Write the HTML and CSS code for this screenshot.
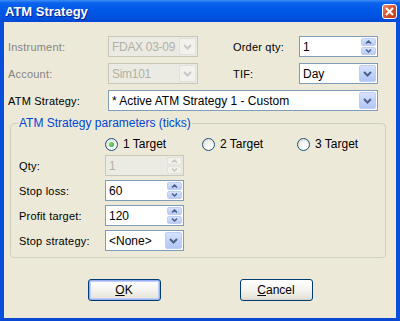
FILE: index.html
```html
<!DOCTYPE html>
<html lang="en">
<head>
  <meta charset="UTF-8">
  <meta name="viewport" content="width=device-width, initial-scale=1.0">
  <title>ATM Strategy</title>
  <link rel="stylesheet" href="styles.css">
</head>
<body>
  <div class="window">
    <div class="titlebar">
      <span class="title">ATM Strategy</span>
      <span class="close">
        <svg width="9" height="9" viewBox="0 0 9 9"><path d="M1 1L8 8M8 1L1 8" stroke="#fff" stroke-width="2"/></svg>
      </span>
    </div>

    <div class="content">
      <div class="top-grid">
        <label class="lbl disabled">Instrument:</label>
        <div class="combo is-disabled">
          <span class="val">FDAX 03-09</span>
          <span class="drop"><svg width="9" height="6" viewBox="0 0 9 6"><path d="M1 1L4.5 4.5L8 1" fill="none" stroke="#c8c8c8" stroke-width="2"/></svg></span>
        </div>
        <label class="lbl lbl-pad">Order qty:</label>
        <div class="spin">
          <span class="val">1</span>
          <span class="arrows">
            <span class="arr"><svg width="7" height="4" viewBox="0 0 7 4"><path d="M1 3.5L3.5 1L6 3.5" fill="none" stroke="#4d6185" stroke-width="1.5"/></svg></span>
            <span class="arr"><svg width="7" height="4" viewBox="0 0 7 4"><path d="M1 0.5L3.5 3L6 0.5" fill="none" stroke="#4d6185" stroke-width="1.5"/></svg></span>
          </span>
        </div>

        <label class="lbl disabled">Account:</label>
        <div class="combo is-disabled">
          <span class="val">Sim101</span>
          <span class="drop"><svg width="9" height="6" viewBox="0 0 9 6"><path d="M1 1L4.5 4.5L8 1" fill="none" stroke="#c8c8c8" stroke-width="2"/></svg></span>
        </div>
        <label class="lbl lbl-pad">TIF:</label>
        <div class="combo">
          <span class="val">Day</span>
          <span class="drop"><svg width="9" height="6" viewBox="0 0 9 6"><path d="M1 1L4.5 4.5L8 1" fill="none" stroke="#4d6185" stroke-width="2"/></svg></span>
        </div>

        <label class="lbl">ATM Strategy:</label>
        <div class="combo wide">
          <span class="val">* Active ATM Strategy 1 - Custom</span>
          <span class="drop"><svg width="9" height="6" viewBox="0 0 9 6"><path d="M1 1L4.5 4.5L8 1" fill="none" stroke="#4d6185" stroke-width="2"/></svg></span>
        </div>
      </div>

      <fieldset class="group">
        <legend>ATM Strategy parameters (ticks)</legend>
        <div class="group-grid">
          <label class="radio-item first"><span class="radio checked"></span>1 Target</label>
          <label class="radio-item"><span class="radio"></span>2 Target</label>
          <label class="radio-item"><span class="radio"></span>3 Target</label>

          <label class="lbl">Qty:</label>
          <div class="spin is-disabled">
            <span class="val">1</span>
            <span class="arrows">
              <span class="arr"><svg width="7" height="4" viewBox="0 0 7 4"><path d="M1 3.5L3.5 1L6 3.5" fill="none" stroke="#c9c7ba" stroke-width="1.5"/></svg></span>
              <span class="arr"><svg width="7" height="4" viewBox="0 0 7 4"><path d="M1 0.5L3.5 3L6 0.5" fill="none" stroke="#c9c7ba" stroke-width="1.5"/></svg></span>
            </span>
          </div>

          <label class="lbl">Stop loss:</label>
          <div class="spin">
            <span class="val">60</span>
            <span class="arrows">
              <span class="arr"><svg width="7" height="4" viewBox="0 0 7 4"><path d="M1 3.5L3.5 1L6 3.5" fill="none" stroke="#4d6185" stroke-width="1.5"/></svg></span>
              <span class="arr"><svg width="7" height="4" viewBox="0 0 7 4"><path d="M1 0.5L3.5 3L6 0.5" fill="none" stroke="#4d6185" stroke-width="1.5"/></svg></span>
            </span>
          </div>

          <label class="lbl">Profit target:</label>
          <div class="spin">
            <span class="val">120</span>
            <span class="arrows">
              <span class="arr"><svg width="7" height="4" viewBox="0 0 7 4"><path d="M1 3.5L3.5 1L6 3.5" fill="none" stroke="#4d6185" stroke-width="1.5"/></svg></span>
              <span class="arr"><svg width="7" height="4" viewBox="0 0 7 4"><path d="M1 0.5L3.5 3L6 0.5" fill="none" stroke="#4d6185" stroke-width="1.5"/></svg></span>
            </span>
          </div>

          <label class="lbl">Stop strategy:</label>
          <div class="combo">
            <span class="val">&lt;None&gt;</span>
            <span class="drop"><svg width="9" height="6" viewBox="0 0 9 6"><path d="M1 1L4.5 4.5L8 1" fill="none" stroke="#4d6185" stroke-width="2"/></svg></span>
          </div>
        </div>
      </fieldset>

      <div class="buttons">
        <button class="btn default"><u>O</u>K</button>
        <button class="btn"><u>C</u>ancel</button>
      </div>
    </div>
  </div>
</body>
</html>
```

FILE: styles.css
```css
body {
  margin: 0;
  padding: 0;
  font-family: "Liberation Sans", Arial, sans-serif;
  font-size: 11px;
  color: #000;
  background: #ece9d8;
}
.window {
  width: 400px;
  height: 321px;
  display: flex;
  flex-direction: column;
  box-sizing: border-box;
}
.titlebar {
  height: 22px;
  flex: none;
  display: flex;
  align-items: center;
  justify-content: space-between;
  padding: 0 3px 0 5px;
  background: linear-gradient(to bottom, #3d8ef7 0, #0a62ec 3px, #0058e7 45%, #0052e0 80%, #0046d3 100%);
}
.title {
  color: #fff;
  font-weight: bold;
  font-size: 13px;
  text-shadow: 1px 1px 0 #0a1e8c;
}
.close {
  width: 15px;
  height: 15px;
  box-sizing: border-box;
  border: 1px solid #fff;
  border-radius: 3px;
  background: linear-gradient(135deg, #e9876c 0, #d9522e 50%, #c13a16 100%);
  display: flex;
  align-items: center;
  justify-content: center;
}
.content {
  flex: 1;
  background: #ece9d8;
  border-left: 4px solid #0a4fdc;
  border-right: 4px solid #0a4fdc;
  border-bottom: 3px solid #0a48d4;
}
.top-grid {
  display: grid;
  grid-template-columns: 100px 90px 101px 79px;
  grid-auto-rows: 21px;
  row-gap: 6px;
  padding: 14px 0 0 4px;
}
.lbl {
  display: flex;
  align-items: center;
  white-space: nowrap;
  letter-spacing: 0.2px;
}
.lbl-pad {
  padding-left: 35px;
}
.disabled {
  color: #858585;
}
.combo, .spin {
  display: flex;
  align-items: stretch;
  height: 21px;
  box-sizing: border-box;
  border: 1px solid #7f9db9;
  background: #fff;
  padding: 1px;
}
.combo .val, .spin .val {
  flex: 1;
  display: flex;
  align-items: center;
  padding-left: 2px;
  white-space: nowrap;
  overflow: hidden;
  font-size: 12px;
}
.wide {
  grid-column: 2 / 5;
}
.drop {
  width: 17px;
  flex: none;
  box-sizing: border-box;
  border: 1px solid #bccdf6;
  border-radius: 2px;
  background: linear-gradient(to bottom, #d6e2fd 0, #c3d4fb 50%, #b2c6f5 100%);
  display: flex;
  align-items: center;
  justify-content: center;
}
.is-disabled {
  border-color: #c9c7ba;
  background: #ebebe4;
  color: #b3b0a3;
}
.is-disabled .val {
  letter-spacing: -0.3px;
}
.is-disabled .drop {
  border-color: #e3e1d9;
  background: #f2f1ec;
}
.arrows {
  width: 15px;
  flex: none;
  display: flex;
  flex-direction: column;
  gap: 1px;
}
.arr {
  flex: 1;
  box-sizing: border-box;
  border: 1px solid #bccdf6;
  border-radius: 2px;
  background: linear-gradient(to bottom, #d6e2fd 0, #b8cbf6 100%);
  display: flex;
  align-items: center;
  justify-content: center;
}
.is-disabled .arr {
  border-color: #e3e1d9;
  background: #f2f1ec;
}
.group {
  margin: 6px 10px 0 6px;
  padding: 7px 0 6px 8px;
  border: 1px solid #d0d0bf;
  border-radius: 4px;
}
.group legend {
  padding: 0 1px;
  margin-left: -1px;
  color: #0046d5;
  font-size: 12px;
  line-height: 13px;
}
.group-grid {
  display: grid;
  grid-template-columns: 86px 97px 95px auto;
  grid-template-rows: 14px repeat(4, 21px);
  row-gap: 4px;
}
.group-grid .lbl {
  grid-column: 1;
}
.group-grid .spin, .group-grid .combo {
  grid-column: 2;
  width: 79px;
}
.radio-item {
  display: flex;
  align-items: center;
  gap: 5px;
  font-size: 12px;
}
.radio-item.first {
  grid-column: 2;
}
.radio {
  width: 13px;
  height: 13px;
  box-sizing: border-box;
  border: 1px solid #1c5180;
  border-radius: 50%;
  background: radial-gradient(circle at 65% 65%, #fff 0, #f4f4f0 40%, #d5d4cc 100%);
  display: flex;
  align-items: center;
  justify-content: center;
}
.radio.checked::after {
  content: "";
  width: 5px;
  height: 5px;
  border-radius: 50%;
  background: radial-gradient(circle at 40% 40%, #7ee07e 0, #21a121 100%);
}
.buttons {
  display: flex;
  justify-content: center;
  gap: 79px;
  margin-top: 21px;
}
.btn {
  width: 73px;
  height: 22px;
  border: 1px solid #003c74;
  border-radius: 3px;
  background: linear-gradient(to bottom, #ffffff 0, #f4f3ee 50%, #e6e4da 90%, #d6d0c5 100%);
  font-family: "Liberation Sans", Arial, sans-serif;
  font-size: 12px;
  color: #000;
  padding: 0;
}
.btn.default {
  box-shadow: inset 0 0 0 1px #97aef0, inset 0 0 0 2px #c0d0f8;
}
```
